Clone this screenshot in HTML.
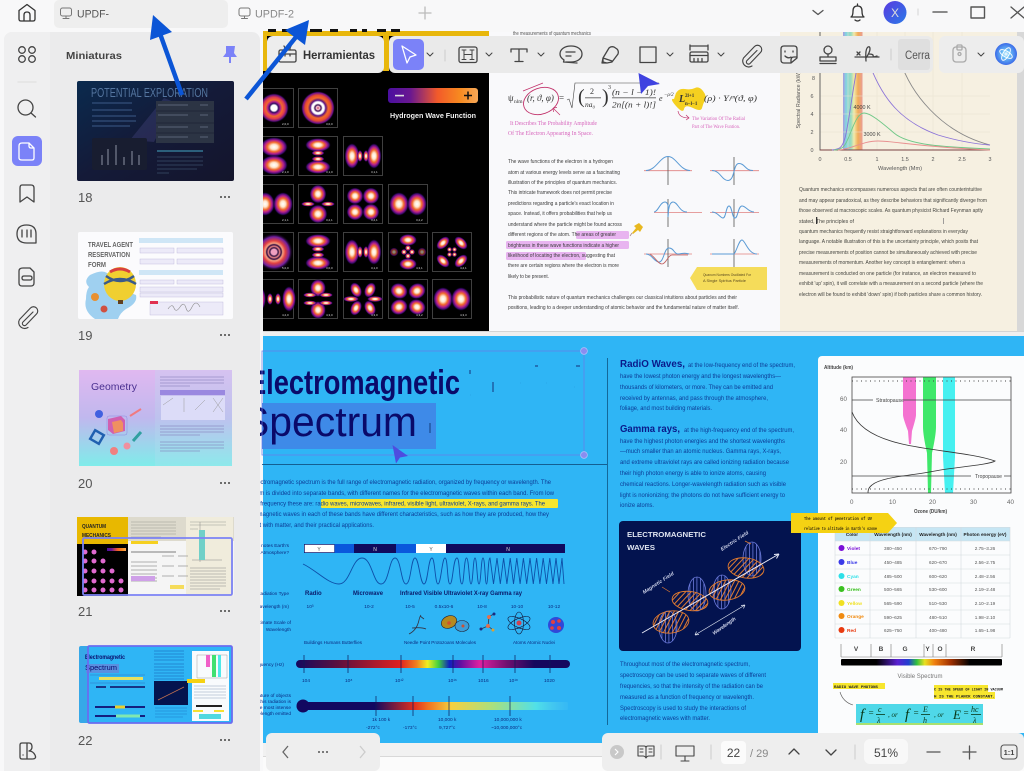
<!DOCTYPE html>
<html lang="es"><head><meta charset="utf-8"><title>UPDF</title>
<style>
html,body{margin:0;padding:0;width:1024px;height:771px;overflow:hidden;background:#f8f8f9}
svg{display:block;filter:blur(.35px);font-family:"Liberation Sans",sans-serif}
.ic{fill:none;stroke:#444;stroke-width:1.3;stroke-linecap:round;stroke-linejoin:round}
.l{fill:#3b3b3b;font-size:5.8px}
.b{fill:#0c3c96;font-size:6px}
.m{fill:#0a2a80;font-size:4.8px}
.w{fill:#ddd;font-size:3px}
.t{fill:#555;font-size:4.6px;text-anchor:middle}
.h{fill:#222;font-size:4.7px;font-weight:bold;text-anchor:middle}
.s{font-family:"Liberation Serif",serif}
</style></head><body>
<svg width="1024" height="771" viewBox="0 0 1024 771" xmlns="http://www.w3.org/2000/svg">
<defs>
<pattern id="po" width="4" height="4" patternUnits="userSpaceOnUse" patternTransform="rotate(35)"><rect width="1" height="4" fill="#e07a30"/></pattern>
<pattern id="pb" width="3.5" height="4" patternUnits="userSpaceOnUse"><rect width=".8" height="4" fill="#6a78d8"/></pattern>
<radialGradient id="o"><stop offset="0" stop-color="#fff"/><stop offset=".25" stop-color="#ffe6cc"/><stop offset=".48" stop-color="#f26a2a"/><stop offset=".68" stop-color="#b21f8e"/><stop offset=".86" stop-color="#3c0a70"/><stop offset="1" stop-color="#000" stop-opacity="0"/></radialGradient>
<radialGradient id="r1"><stop offset="0" stop-color="#fff"/><stop offset=".2" stop-color="#fff"/><stop offset=".3" stop-color="#300a60"/><stop offset=".42" stop-color="#b21f8e"/><stop offset=".55" stop-color="#f26a2a"/><stop offset=".72" stop-color="#e03a50"/><stop offset=".88" stop-color="#5a1080"/><stop offset="1" stop-color="#000" stop-opacity="0"/></radialGradient>
<radialGradient id="r2"><stop offset="0" stop-color="#c84060"/><stop offset=".1" stop-color="#ffd0d8"/><stop offset=".18" stop-color="#3a0a50"/><stop offset=".27" stop-color="#fff"/><stop offset=".36" stop-color="#fff"/><stop offset=".46" stop-color="#5a1080"/><stop offset=".6" stop-color="#f26a2a"/><stop offset=".75" stop-color="#e84a30"/><stop offset=".9" stop-color="#6a1090"/><stop offset="1" stop-color="#000" stop-opacity="0"/></radialGradient>
<radialGradient id="r3"><stop offset="0" stop-color="#f0a0c0"/><stop offset=".15" stop-color="#f0a0c0"/><stop offset=".22" stop-color="#301040"/><stop offset=".3" stop-color="#e88"/><stop offset=".38" stop-color="#300a40"/><stop offset=".46" stop-color="#f8a080"/><stop offset=".6" stop-color="#e04040"/><stop offset=".8" stop-color="#7020a0"/><stop offset="1" stop-color="#000" stop-opacity="0"/></radialGradient>
<linearGradient id="hb"><stop offset="0" stop-color="#4a0fa0"/><stop offset=".25" stop-color="#6a1890"/><stop offset=".55" stop-color="#f25a2a"/><stop offset=".8" stop-color="#f78a20"/><stop offset="1" stop-color="#f7a858"/></linearGradient>
<linearGradient id="fq" gradientUnits="userSpaceOnUse" x1="296" x2="570" y1="0" y2="0"><stop offset="0" stop-color="#15085e"/><stop offset=".15" stop-color="#5a1040"/><stop offset=".38" stop-color="#e02020"/><stop offset=".44" stop-color="#f08020"/><stop offset=".48" stop-color="#f0f020"/><stop offset=".52" stop-color="#40d040"/><stop offset=".56" stop-color="#1020c0"/><stop offset=".6" stop-color="#6010a0"/><stop offset=".67" stop-color="#e020a0"/><stop offset=".77" stop-color="#701070"/><stop offset=".87" stop-color="#15085e"/><stop offset="1" stop-color="#15085e"/></linearGradient>
<linearGradient id="tm" gradientUnits="userSpaceOnUse" x1="303" x2="568" y1="0" y2="0"><stop offset="0" stop-color="#120860"/><stop offset=".27" stop-color="#120860"/><stop offset=".42" stop-color="#e03020"/><stop offset=".47" stop-color="#f07020"/><stop offset=".56" stop-color="#f5d040"/><stop offset=".72" stop-color="#a8e080"/><stop offset=".88" stop-color="#50e0e8"/><stop offset="1" stop-color="#50c8f0" stop-opacity=".2"/></linearGradient>
<linearGradient id="vs" gradientUnits="userSpaceOnUse" x1="841" x2="1002" y1="0" y2="0"><stop offset="0" stop-color="#000"/><stop offset=".22" stop-color="#000"/><stop offset=".35" stop-color="#5a20d0"/><stop offset=".42" stop-color="#2040d0"/><stop offset=".47" stop-color="#30c040"/><stop offset=".52" stop-color="#e8e020"/><stop offset=".58" stop-color="#f08010"/><stop offset=".68" stop-color="#a03000"/><stop offset=".8" stop-color="#000"/><stop offset="1" stop-color="#000"/></linearGradient>
<linearGradient id="sp"><stop offset="0" stop-color="#9a8ce0"/><stop offset=".15" stop-color="#70d0e0"/><stop offset=".4" stop-color="#8ad8b8"/><stop offset=".55" stop-color="#f0e8a0"/><stop offset=".75" stop-color="#f0a040"/><stop offset=".95" stop-color="#e89080"/><stop offset="1" stop-color="#f6f0e0"/></linearGradient>
<linearGradient id="t18" x1="0" y1="0" x2="1" y2="1"><stop offset="0" stop-color="#0a2a4e"/><stop offset=".5" stop-color="#141a38"/><stop offset="1" stop-color="#14152c"/></linearGradient>
<linearGradient id="t20" x1="0" y1="0" x2="0" y2="1"><stop offset="0" stop-color="#e0b8f0"/><stop offset=".5" stop-color="#c0b8ee"/><stop offset="1" stop-color="#80ecea"/></linearGradient>
<linearGradient id="av" x1="0" y1="0" x2="1" y2="1"><stop offset="0" stop-color="#5a3ae0"/><stop offset="1" stop-color="#2a7ae8"/></linearGradient>
<radialGradient id="ai"><stop offset="0" stop-color="#fff"/><stop offset=".3" stop-color="#70c8f8"/><stop offset="1" stop-color="#3a6ae8"/></radialGradient>
<g id="a0"><rect x=".5" y=".5" width="39" height="39" fill="#000" stroke="#5a5a5a" stroke-width=".7"/><circle cx="20" cy="20" r="15" fill="url(#r1)"/></g>
<g id="a1"><rect x=".5" y=".5" width="39" height="39" fill="#000" stroke="#5a5a5a" stroke-width=".7"/><circle cx="20" cy="20" r="17" fill="url(#r2)"/></g>
<g id="a2"><rect x=".5" y=".5" width="39" height="39" fill="#000" stroke="#5a5a5a" stroke-width=".7"/><circle cx="20" cy="20" r="19" fill="url(#r3)"/></g>
<g id="b0"><rect x=".5" y=".5" width="39" height="39" fill="#000" stroke="#5a5a5a" stroke-width=".7"/><ellipse cx="20" cy="11" rx="14" ry="10" fill="url(#o)"/><ellipse cx="20" cy="29" rx="14" ry="10" fill="url(#o)"/></g>
<g id="b1"><rect x=".5" y=".5" width="39" height="39" fill="#000" stroke="#5a5a5a" stroke-width=".7"/><ellipse cx="20" cy="9" rx="13" ry="7" fill="url(#o)"/><ellipse cx="20" cy="31" rx="13" ry="7" fill="url(#o)"/><ellipse cx="20" cy="17" rx="6.500" ry="2.800" fill="url(#o)"/><ellipse cx="20" cy="23" rx="6.500" ry="2.800" fill="url(#o)"/></g>
<g id="b2"><rect x=".5" y=".5" width="39" height="39" fill="#000" stroke="#5a5a5a" stroke-width=".7"/><ellipse cx="9" cy="20" rx="7.500" ry="13" fill="url(#o)"/><ellipse cx="31" cy="20" rx="7.500" ry="13" fill="url(#o)"/><ellipse cx="17" cy="20" rx="2.800" ry="6" fill="url(#o)"/><ellipse cx="23" cy="20" rx="2.800" ry="6" fill="url(#o)"/></g>
<g id="c0"><rect x=".5" y=".5" width="39" height="39" fill="#000" stroke="#5a5a5a" stroke-width=".7"/><ellipse cx="11" cy="20" rx="10" ry="12" fill="url(#o)"/><ellipse cx="29" cy="20" rx="10" ry="12" fill="url(#o)"/></g>
<g id="c1"><rect x=".5" y=".5" width="39" height="39" fill="#000" stroke="#5a5a5a" stroke-width=".7"/><ellipse cx="20" cy="10" rx="8.500" ry="9.500" fill="url(#o)"/><ellipse cx="20" cy="30" rx="9.500" ry="9.500" fill="url(#o)"/><ellipse cx="10" cy="20" rx="7" ry="2.500" fill="url(#o)"/><ellipse cx="30" cy="20" rx="7" ry="2.500" fill="url(#o)"/></g>
<g id="c2"><rect x=".5" y=".5" width="39" height="39" fill="#000" stroke="#5a5a5a" stroke-width=".7"/><circle cx="12" cy="12" r="8.500" fill="url(#o)"/><circle cx="28" cy="12" r="8.500" fill="url(#o)"/><circle cx="12" cy="28" r="8.500" fill="url(#o)"/><circle cx="28" cy="28" r="8.500" fill="url(#o)"/></g>
<g id="d0"><rect x=".5" y=".5" width="39" height="39" fill="#000" stroke="#5a5a5a" stroke-width=".7"/><ellipse cx="20" cy="8" rx="9" ry="6" fill="url(#o)"/><ellipse cx="20" cy="32" rx="9" ry="6" fill="url(#o)"/><circle cx="6" cy="20" r="4.500" fill="url(#o)" opacity=".55"/><circle cx="34" cy="20" r="4.500" fill="url(#o)" opacity=".55"/><circle cx="16" cy="20" r="3" fill="url(#o)"/><circle cx="24" cy="20" r="3" fill="url(#o)"/><circle cx="20" cy="16" r="3" fill="url(#o)"/><circle cx="20" cy="24" r="3" fill="url(#o)"/></g>
<g id="d1"><rect x=".5" y=".5" width="39" height="39" fill="#000" stroke="#5a5a5a" stroke-width=".7"/><ellipse cx="11" cy="11" rx="8" ry="5" transform="rotate(-45 11 11)" fill="url(#o)"/><ellipse cx="29" cy="11" rx="8" ry="5" transform="rotate(45 29 11)" fill="url(#o)"/><ellipse cx="11" cy="29" rx="8" ry="5" transform="rotate(45 11 29)" fill="url(#o)"/><ellipse cx="29" cy="29" rx="8" ry="5" transform="rotate(-45 29 29)" fill="url(#o)"/><circle cx="17.500" cy="17.500" r="2.500" fill="url(#o)"/><circle cx="22.500" cy="17.500" r="2.500" fill="url(#o)"/><circle cx="17.500" cy="22.500" r="2.500" fill="url(#o)"/><circle cx="22.500" cy="22.500" r="2.500" fill="url(#o)"/></g>
<g id="e0"><rect x=".5" y=".5" width="39" height="39" fill="#000" stroke="#5a5a5a" stroke-width=".7"/><ellipse cx="5" cy="20" rx="7" ry="13" fill="url(#o)"/><ellipse cx="35" cy="20" rx="7" ry="13" fill="url(#o)"/><ellipse cx="16" cy="20" rx="3" ry="6" fill="url(#o)"/><ellipse cx="24" cy="20" rx="3" ry="6" fill="url(#o)"/></g>
<g id="e1"><rect x=".5" y=".5" width="39" height="39" fill="#000" stroke="#5a5a5a" stroke-width=".7"/><ellipse cx="20" cy="9" rx="8" ry="9" fill="url(#o)"/><ellipse cx="20" cy="31" rx="8" ry="9" fill="url(#o)"/><ellipse cx="12" cy="16" rx="7" ry="2.500" fill="url(#o)"/><ellipse cx="28" cy="16" rx="7" ry="2.500" fill="url(#o)"/><ellipse cx="12" cy="24" rx="7" ry="2.500" fill="url(#o)"/><ellipse cx="28" cy="24" rx="7" ry="2.500" fill="url(#o)"/></g>
<g id="e2"><rect x=".5" y=".5" width="39" height="39" fill="#000" stroke="#5a5a5a" stroke-width=".7"/><ellipse cx="13" cy="11" rx="5.500" ry="8" transform="rotate(-25 13 11)" fill="url(#o)"/><ellipse cx="27" cy="11" rx="5.500" ry="8" transform="rotate(25 27 11)" fill="url(#o)"/><ellipse cx="13" cy="29" rx="5.500" ry="8" transform="rotate(25 13 29)" fill="url(#o)"/><ellipse cx="27" cy="29" rx="5.500" ry="8" transform="rotate(-25 27 29)" fill="url(#o)"/><ellipse cx="8" cy="20" rx="8" ry="3" fill="url(#o)"/><ellipse cx="32" cy="20" rx="8" ry="3" fill="url(#o)"/></g>
<g id="e3"><rect x=".5" y=".5" width="39" height="39" fill="#000" stroke="#5a5a5a" stroke-width=".7"/><ellipse cx="11" cy="12" rx="9" ry="8" transform="rotate(25 11 12)" fill="url(#o)"/><ellipse cx="29" cy="12" rx="9" ry="8" transform="rotate(-25 29 12)" fill="url(#o)"/><ellipse cx="11" cy="28" rx="9" ry="8" transform="rotate(-25 11 28)" fill="url(#o)"/><ellipse cx="29" cy="28" rx="9" ry="8" transform="rotate(25 29 28)" fill="url(#o)"/></g>
</defs>

<rect width="1024" height="771" fill="#f8f8f9"/>

<!-- TOP PAGE -->
<rect x="263" y="32" width="226" height="299" fill="#000"/>
<rect x="489" y="32" width="291" height="299" fill="#f9f9fb"/>
<rect x="780" y="32" width="237" height="299" fill="#f6f0e1"/>
<rect x="1017" y="32" width="7" height="299" fill="#d8d8d8"/>
<rect x="263" y="331" width="761" height="5" fill="#efefef"/>
<rect x="263" y="331" width="761" height="1" fill="#d4d4d4"/>
<!-- yellow band -->
<rect x="263" y="31" width="226" height="5" fill="#e8b70c"/>
<rect x="263" y="31" width="4" height="40" fill="#e8b70c"/>
<rect x="383" y="31" width="6" height="40" fill="#e8b70c"/>
<path d="M268 29h8v3h-8zM282 29h6v3h-6zM292 29h8v3h-8zM310 29h12v3h-12zM330 29h8v3h-8zM350 29h7v3h-7zM362 29h5v3h-5zM377 29h9v3h-9zM391 29h9v3h-9z" fill="#111"/>
<!-- orbitals -->
<use href="#a0" x="254" y="88"/><use href="#a1" x="298" y="88"/>
<use href="#b0" x="254" y="136"/><use href="#b1" x="298" y="136"/><use href="#b2" x="343" y="136"/>
<use href="#c0" x="254" y="184"/><use href="#c1" x="298" y="184"/><use href="#c2" x="343" y="184"/><use href="#c0" x="388" y="184"/>
<use href="#a2" x="254" y="232"/><use href="#b1" x="298" y="232"/><use href="#b2" x="343" y="232"/><use href="#d0" x="388" y="232"/><use href="#d1" x="432" y="232"/>
<use href="#e0" x="254" y="279"/><use href="#e1" x="298" y="279"/><use href="#e2" x="343" y="279"/><use href="#e3" x="388" y="279"/><use href="#c0" x="432" y="279"/>
<rect x="254" y="80" width="9" height="250" fill="#f0f0f0"/>
<g class="w">
<text x="282" y="125">2,0,0</text><text x="326" y="125">3,0,0</text>
<text x="282" y="173">2,1,0</text><text x="326" y="173">3,1,0</text><text x="371" y="173">3,1,1</text>
<text x="282" y="221">2,1,1</text><text x="326" y="221">3,2,1</text><text x="371" y="221">3,2,1</text><text x="416" y="221">3,2,2</text>
<text x="282" y="269">5,0,0</text><text x="326" y="269">3,0,0</text><text x="371" y="269">3,1,0</text><text x="416" y="269">4,3,1</text><text x="460" y="269">4,2,1</text>
<text x="282" y="316">4,2,0</text><text x="326" y="316">4,3,0</text><text x="371" y="316">4,3,0</text><text x="416" y="316">4,3,2</text><text x="460" y="316">4,3,3</text>
</g>
<rect x="388" y="88" width="90" height="15" rx="3" fill="url(#hb)"/>
<rect x="395" y="94.800" width="9" height="1.600" fill="#ddd"/>
<path d="M464 95.500h8M468 91.500v8" stroke="#111" stroke-width="1.500"/>
<text x="390" y="118" fill="#eee" font-size="7.200" font-weight="bold" textLength="86" lengthAdjust="spacingAndGlyphs">Hydrogen Wave Function</text>

<!-- white page: formula -->
<text x="513" y="35" font-size="5" fill="#555" textLength="78" lengthAdjust="spacingAndGlyphs">the measurements of quantum mechanics</text>
<g class="s" fill="#333">
<text x="508" y="101" font-size="9">ψ</text><text x="514" y="103" font-size="5.500">nlm</text>
<text x="527" y="101" font-size="9" font-style="italic">(r, ϑ, φ)</text>
<text x="559" y="101" font-size="9">=</text>
<path d="M567 100l2-1 3 9 3-25h84" fill="none" stroke="#444" stroke-width=".6"/>
<text x="578" y="103" font-size="20" font-weight="100">(</text><text x="602" y="103" font-size="20" font-weight="100">)</text>
<text x="590" y="94" font-size="8">2</text><rect x="585" y="97.500" width="16" height=".7" fill="#333"/>
<text x="585" y="107" font-size="7.500" font-style="italic">na₀</text>
<text x="608" y="89" font-size="6">3</text>
<text x="612" y="95" font-size="8.500" font-style="italic" textLength="44" lengthAdjust="spacingAndGlyphs">(n − l − 1)!</text>
<rect x="612" y="97.500" width="44" height=".7" fill="#333"/>
<text x="612" y="107.500" font-size="8.500" font-style="italic" textLength="44" lengthAdjust="spacingAndGlyphs">2n[(n + l)!]</text>
<text x="659" y="101" font-size="8" font-style="italic">e</text><text x="664" y="96" font-size="5" font-style="italic">−ρ/2</text>
</g>
<path d="M676 93q3-5 9-4t10-1 8 3 2 9-3 8-9 0-9 1-8-3-2-7z" fill="#f5d020"/>
<g class="s" fill="#333">
<text x="679" y="102" font-size="10" font-weight="bold" font-style="italic">L</text>
<text x="685" y="97" font-size="5" font-weight="bold">2l+1</text><text x="685" y="105" font-size="5" font-weight="bold">n−l−1</text>
<text x="704" y="101" font-size="8.500" font-style="italic" textLength="53" lengthAdjust="spacingAndGlyphs">(ρ) · Yₗᵐ(ϑ, φ)</text>
</g>
<ellipse cx="541" cy="101" rx="18" ry="13" transform="rotate(-20 541 101)" fill="none" stroke="#c2336b" stroke-width=".9"/>
<path d="M523 91l20-8M560 115q-4-4-7-7M553 108l4-.5M553 108l.5 4" fill="none" stroke="#c2336b" stroke-width=".7"/>
<g class="s" fill="#d765bc" font-size="6">
<text x="510" y="125" textLength="87" lengthAdjust="spacingAndGlyphs">It Describes The Probability Amplitude</text>
<text x="508" y="135" textLength="85" lengthAdjust="spacingAndGlyphs">Of The Electron Appearing In Space.</text>
<text x="692" y="120" font-size="5" textLength="53" lengthAdjust="spacingAndGlyphs">The Variation Of The Radial</text>
<text x="692" y="128" font-size="5" textLength="48" lengthAdjust="spacingAndGlyphs">Part of The Wave Funtion.</text>
</g>
<path d="M678 111q1 7 11 7M686 115l3 3-3 2" fill="none" stroke="#c2336b" stroke-width=".7"/>

<!-- highlights -->
<g fill="#e8b4f0"><rect x="576" y="231" width="53" height="8" rx="1.500"/><rect x="506" y="241" width="123" height="8" rx="1.500"/><rect x="506" y="252" width="80" height="8" rx="1.500"/></g>
<g class="l">
<text x="508" y="163" textLength="105" lengthAdjust="spacingAndGlyphs">The wave functions of the electron in a hydrogen</text>
<text x="508" y="174" textLength="112" lengthAdjust="spacingAndGlyphs">atom at various energy levels serve as a fascinating</text>
<text x="508" y="184" textLength="109" lengthAdjust="spacingAndGlyphs">illustration of the principles of quantum mechanics.</text>
<text x="508" y="194" textLength="104" lengthAdjust="spacingAndGlyphs">This intricate framework does not permit precise</text>
<text x="508" y="205" textLength="106" lengthAdjust="spacingAndGlyphs">predictions regarding a particle's exact location in</text>
<text x="508" y="215" textLength="104" lengthAdjust="spacingAndGlyphs">space. Instead, it offers probabilities that help us</text>
<text x="508" y="226" textLength="114" lengthAdjust="spacingAndGlyphs">understand where the particle might be found across</text>
<text x="508" y="236" textLength="108" lengthAdjust="spacingAndGlyphs">different regions of the atom. The areas of greater</text>
<text x="508" y="247" textLength="111" lengthAdjust="spacingAndGlyphs">brightness in these wave functions indicate a higher</text>
<text x="508" y="257" textLength="107" lengthAdjust="spacingAndGlyphs">likelihood of locating the electron, suggesting that</text>
<text x="508" y="267" textLength="111" lengthAdjust="spacingAndGlyphs">there are certain regions where the electron is more</text>
<text x="508" y="278" textLength="41" lengthAdjust="spacingAndGlyphs">likely to be present.</text>
<text x="508" y="299" textLength="229" lengthAdjust="spacingAndGlyphs">This probabilistic nature of quantum mechanics challenges our classical intuitions about particles and their</text>
<text x="508" y="309" textLength="231" lengthAdjust="spacingAndGlyphs">positions, leading to a deeper understanding of atomic behavior and the fundamental nature of matter itself.</text>
</g>
<!-- pin -->
<path d="M632 233l4-5-2-2 5-3 4 4-3 5-2-2-5 4z" fill="#e8b820"/><path d="M632 233l-2 3" stroke="#a88" stroke-width=".8"/>
<!-- small plots -->
<g fill="none" stroke-width=".8">
<g stroke="#e08080"><path d="M644 170.700h48M710 170.700h49M654 212.500h48M710 212.500h49M644 254h48M710 254h49"/></g>
<g stroke="#555"><path d="M668 157v28M734 157v28M668 199v28M734 199v28M668 239v28M734 239v28"/></g>
<g stroke="#5b9bd5" stroke-width="1">
<path d="M646 170.500c10 0 14-14 22-14s12 14 22 14"/>
<path d="M712 170.500c8 0 10 10 16 10 7 0 5-17 11-17s6 7 14 7"/>
<path d="M654 212c4 0 6-10 11-10 5 0 3 15 3 15s0-15 5-15 6 10 14 10"/>
<path d="M712 212c6 0 8 6 11 6s3-12 6-12 3 12 6 12 3-12 7-12 6 6 12 6"/>
<path d="M646 254c6 0 8 8 13 8s5-14 10-14 5 6 9 6 6-2 11 0"/>
<path d="M712 254c12 0 16 0 22-0 3-4 5-14 8-14s6 14 15 14"/>
</g>
<path d="M650 254c6 4 8 10 12 10s6-9 10-9 8 0 16 0" stroke="#c06060"/>
</g>
<!-- yellow callout -->
<path d="M690 278l7-11h70v23h-70z" fill="#f5dc5a"/>
<g fill="#5a4a20" font-size="3.600"><text x="703" y="276" textLength="48" lengthAdjust="spacingAndGlyphs">Quanum Numbers Oscillated For</text><text x="703" y="282" textLength="43" lengthAdjust="spacingAndGlyphs">A Single Spiritus Particle</text></g>

<!-- beige chart -->
<rect x="843" y="32" width="20" height="118" fill="url(#sp)" opacity=".85"/>
<g stroke="#e8e2d0" stroke-width=".5"><path d="M820 96h170M820 114h170M820 132h170M848 32v118M877 32v118M905 32v118M933 32v118M962 32v118"/></g>
<path d="M820 32V150H990" fill="none" stroke="#555" stroke-width=".9"/>
<path d="M820 150h170" stroke="#a03030" stroke-width=".6"/>
<g fill="none" stroke-width=".9">
<path d="M900 60c10 32 40 72 90 85" stroke="#888"/>
<path d="M832 150c8-1 10-2 13-12s8-50 12-70M868 60c14 40 34 62 70 75 20 6 38 9 52 10" stroke="#8a72d8"/>
<path d="M834 150c10 0 12-6 16-16s8-21 14-21 16 8 30 20 48 14 96 16" stroke="#70c888"/>
<path d="M838 150c12 0 24-9 40-9s40 6 112 9" stroke="#e89090"/>
</g>
<g fill="#555" font-size="5.400" text-anchor="middle">
<text x="820" y="161">0</text><text x="848" y="161">0.5</text><text x="877" y="161">1</text><text x="905" y="161">1.5</text><text x="933" y="161">2</text><text x="962" y="161">2.5</text><text x="990" y="161">3</text>
<text x="900" y="170" font-size="5.600">Wavelength (Mm)</text>
<text x="815" y="80" text-anchor="end">8</text><text x="812" y="98">6</text><text x="812" y="116">4</text><text x="812" y="134">2</text><text x="812" y="152">0</text>
<text x="862" y="109" fill="#444">4000 K</text><text x="872" y="136" fill="#444">3000 K</text>
<text transform="translate(800,100) rotate(-90)" font-size="5.400">Spectral Radiance (kW)</text>
</g>
<g class="l" style="fill:#454540;font-size:5.600px">
<text x="799" y="191" textLength="183" lengthAdjust="spacingAndGlyphs">Quantum mechanics encompasses numerous aspects that are often counterintuitive</text>
<text x="799" y="202" textLength="188" lengthAdjust="spacingAndGlyphs">and may appear paradoxical, as they describe behaviors that significantly diverge from</text>
<text x="799" y="212" textLength="184" lengthAdjust="spacingAndGlyphs">those observed at macroscopic scales. As quantum physicist Richard Feynman aptly</text>
<text x="799" y="223" textLength="55" lengthAdjust="spacingAndGlyphs">stated, The principles of</text>
<text x="799" y="233" textLength="169" lengthAdjust="spacingAndGlyphs">quantum mechanics frequently resist straightforward explanations in everyday</text>
<text x="799" y="243" textLength="179" lengthAdjust="spacingAndGlyphs">language. A notable illustration of this is the uncertainty principle, which posits that</text>
<text x="799" y="254" textLength="178" lengthAdjust="spacingAndGlyphs">precise measurements of position cannot be simultaneously achieved with precise</text>
<text x="799" y="264" textLength="166" lengthAdjust="spacingAndGlyphs">measurements of momentum. Another key concept is entanglement: when a</text>
<text x="799" y="275" textLength="177" lengthAdjust="spacingAndGlyphs">measurement is conducted on one particle (for instance, an electron measured to</text>
<text x="799" y="285" textLength="184" lengthAdjust="spacingAndGlyphs">exhibit 'up' spin), it will correlate with a measurement on a second particle (where the</text>
<text x="799" y="296" textLength="183" lengthAdjust="spacingAndGlyphs">electron will be found to exhibit 'down' spin) if both particles share a common history.</text>
</g>
<rect x="816" y="217" width="1.300" height="7" fill="#333"/><rect x="943" y="218" width=".8" height="6" fill="#888"/>

<!-- BLUE PAGE -->
<rect x="263" y="336" width="761" height="407" fill="#2fb5f5"/>
<rect x="263" y="743" width="761" height="13" fill="#f1f1f1"/><rect x="263" y="756" width="761" height="1" fill="#d8d8d8"/><rect x="263" y="757" width="761" height="14" fill="#fbfbfb"/>
<rect x="262" y="403" width="174" height="46" fill="#3e8ae8"/>
<text x="248" y="394" font-size="34" font-weight="bold" fill="#0a0a6a" textLength="212" lengthAdjust="spacingAndGlyphs">Electromagnetic</text>
<text x="242" y="436" font-size="42" fill="#0a0a6a" textLength="175" lengthAdjust="spacingAndGlyphs">Spectrum</text>
<path d="M470 370v4M493 382v10M520 383h.1M470 395h.1M535 366h3M546 383h.1M576 366h4M574 387h.1M430 423v10" stroke="#1a4a90" stroke-width="1.200" fill="none"/>
<rect x="262" y="351" width="322" height="104" fill="none" stroke="#6a7be8" stroke-width=".7"/>
<circle cx="584" cy="351" r="3.400" fill="#8a8df0" stroke="#b5c0f8" stroke-width=".7"/><circle cx="584" cy="455" r="3.400" fill="#8a8df0" stroke="#b5c0f8" stroke-width=".7"/>
<rect x="262" y="464" width="345" height=".8" fill="#0e4a7a"/>
<rect x="607" y="358" width=".9" height="367" fill="#12608f"/>
<rect x="321" y="499" width="237" height="9" rx="1" fill="#f7e62e"/>
<g class="b">
<text x="252" y="484" textLength="299" lengthAdjust="spacingAndGlyphs">Electromagnetic spectrum is the full range of electromagnetic radiation, organized by frequency or wavelength. The</text>
<text x="240" y="495" textLength="314" lengthAdjust="spacingAndGlyphs">spectrum is divided into separate bands, with different names for the electromagnetic waves within each band. From low</text>
<text x="241" y="505.500" textLength="304" lengthAdjust="spacingAndGlyphs">to high frequency these are: radio waves, microwaves, infrared, visible light, ultraviolet, X-rays, and gamma rays. The</text>
<text x="240" y="516" textLength="309" lengthAdjust="spacingAndGlyphs">electromagnetic waves in each of these bands have different characteristics, such as how they are produced, how they</text>
<text x="242" y="527" textLength="132" lengthAdjust="spacingAndGlyphs">interact with matter, and their practical applications.</text>
</g>
<!-- spectrum chart -->
<rect x="304" y="544" width="261" height="9" fill="#100a5e"/>
<rect x="334" y="544" width="20" height="9" fill="#0a58dc"/><rect x="396" y="544" width="20" height="9" fill="#0a58dc"/>
<rect x="304.500" y="544.500" width="30" height="8" fill="#fff" stroke="#102070" stroke-width=".5"/><rect x="416" y="544" width="30" height="9" fill="#fff"/>
<g font-size="5" text-anchor="middle"><text x="319" y="551" fill="#555">Y</text><text x="431" y="551" fill="#555">Y</text><text x="375" y="551" fill="#ddd">N</text><text x="508" y="551" fill="#ddd">N</text></g>
<path d="M303 564C316 570 328 584 339 584C350 584 352 558 362 558C372 558 373 584 381 584C389 584 389 558 395 558C401 558 401 584 406 584C411 584 411 558 415 558C419 558 420 584 424 584C428 584 428 558 432 558C435 558 435 584 438 584C441 584 442 558 445 558C448 558 447 584 450 584C453 584 453 558 457 558C460 558 459 584 462 584C464 584 464 558 466.500 558C469 558 469 584 471 584C473 584 473 558 475 558C477 558 477 584 479 584C481 584 481 558 483 558C485 558 485 584 486.500 584C488 584 488 558 490 558L493.500 584L497 558L500.300 584L503.600 558L506.900 584L510.200 558L513.500 584L516.800 558L520.100 584L523.400 558L526.700 584L530 558L533.300 584L536.600 558L539.900 584L543.200 558L546.500 584L549.800 558L553 584L556 558L559 584L562 558L564 584" fill="none" stroke="#0e4fa8" stroke-width=".9"/>
<g fill="#0a1a6a" font-size="6" font-weight="bold"><text x="305" y="595">Radio</text><text x="353" y="595" textLength="30" lengthAdjust="spacingAndGlyphs">Microwave</text><text x="400" y="595" textLength="122" lengthAdjust="spacingAndGlyphs">Infrared Visible Ultraviolet X-ray Gamma ray</text></g>
<g class="m" text-anchor="end">
<text x="289" y="547">notes Earth's</text><text x="289" y="554">Atmosphere?</text>
<text x="289" y="595">Radiation Type</text><text x="289" y="608">Wavelength (m)</text>
<text x="291" y="624">Approximate Scale of</text><text x="291" y="631">Wavelength</text>
<text x="284" y="666">Frequency (Hz)</text>
<text x="291" y="697">Temperature of objects</text><text x="291" y="703">this radiation is</text><text x="291" y="709">the most intense</text><text x="291" y="715">wavelength emitted</text>
</g>
<g class="m" text-anchor="middle">
<text x="310" y="608">10³</text><text x="369" y="608">10-2</text><text x="410" y="608">10-5</text><text x="444" y="608">0.5x10-6</text><text x="482" y="608">10-8</text><text x="517" y="608">10-10</text><text x="554" y="608">10-12</text>
</g>
<g class="m"><text x="304" y="644" textLength="58" lengthAdjust="spacingAndGlyphs">Buildings Humans Butterflies</text><text x="404" y="644" textLength="72" lengthAdjust="spacingAndGlyphs">Needle Point Protozoans Molecules</text><text x="513" y="644" textLength="42" lengthAdjust="spacingAndGlyphs">Atoms Atomic Nuclei</text></g>
<!-- needle/proto/mol/atom/nuc -->
<path d="M409 634q8-4 10-14 1-4 2-5M412 628q10-1 14 1M420 616l4 3" fill="none" stroke="#334" stroke-width=".8"/>
<ellipse cx="449" cy="622" rx="8" ry="6" transform="rotate(-25 449 622)" fill="#b58a20" stroke="#223" stroke-width=".6"/><ellipse cx="462" cy="626" rx="7" ry="5.500" fill="#3d9ed8" stroke="#223" stroke-width=".6"/><circle cx="449" cy="623" r="1.800" fill="#d05030"/><circle cx="463" cy="626" r="1.500" fill="#d05030"/>
<path d="M481 629l7-3 1-9M488 626l5 4M488 617l6-3" stroke="#334" stroke-width=".8" fill="none"/><circle cx="488" cy="626" r="2" fill="#e07050"/><circle cx="489" cy="617" r="2" fill="#e07050"/><circle cx="481" cy="629" r="1.500" fill="#1a2a80"/><circle cx="494" cy="614" r="1.500" fill="#1a2a80"/><circle cx="493" cy="630" r="1.500" fill="#e0a030"/>
<g fill="none" stroke="#113" stroke-width=".6"><ellipse cx="519" cy="623" rx="12" ry="4.500" transform="rotate(25 519 623)"/><ellipse cx="519" cy="623" rx="12" ry="4.500" transform="rotate(-25 519 623)"/><ellipse cx="519" cy="623" rx="4.500" ry="11"/></g><circle cx="519" cy="623" r="2.500" fill="#d04050"/>
<circle cx="556" cy="625" r="8" fill="#3048d8"/><circle cx="553" cy="622" r="2" fill="#e04040"/><circle cx="559" cy="628" r="2" fill="#e04040"/><circle cx="559" cy="621" r="1.800" fill="#e04040"/><circle cx="552" cy="628" r="1.800" fill="#e04040"/>
<!-- freq -->
<rect x="296" y="660" width="274" height="8" rx="4" fill="url(#fq)"/>
<path d="M304 655v18M348 655v18M401 655v18M453 655v18M483 655v18M515 655v18M550 655v18" stroke="#0a1a5a" stroke-width=".7"/>
<g class="m"><text x="302" y="682">104</text><text x="345" y="682">10⁸</text><text x="395" y="682">10¹²</text><text x="448" y="682">10¹⁶</text><text x="478" y="682">1016</text><text x="509" y="682">10¹⁸</text><text x="544" y="682">1020</text></g>
<!-- temp -->
<rect x="303" y="702" width="265" height="8" rx="1" fill="url(#tm)"/><circle cx="303" cy="706" r="6.500" fill="#120860"/>
<path d="M376 696v20M413 696v20M449 696v20M510 696v20" stroke="#0a1a5a" stroke-width=".7"/>
<g class="m"><text x="372" y="721">1k 100 k</text><text x="438" y="721">10,000 k</text><text x="494" y="721">10,000,000 k</text><text x="366" y="729">-272°c</text><text x="403" y="729">-173°c</text><text x="439" y="729">9,727°c</text><text x="491" y="729">~10,000,000°c</text></g>

<!-- right text column -->
<g fill="#0a1a8a" font-weight="bold"><text x="620" y="367" font-size="10.500" textLength="65" lengthAdjust="spacingAndGlyphs">RadiO Waves,</text><text x="620" y="432" font-size="10" textLength="60" lengthAdjust="spacingAndGlyphs">Gamma rays,</text></g>
<g class="b" style="font-size:6.100px">
<text x="688" y="367" textLength="107" lengthAdjust="spacingAndGlyphs">at the low-frequency end of the spectrum,</text>
<text x="620" y="378" textLength="161" lengthAdjust="spacingAndGlyphs">have the lowest photon energy and the longest wavelengths—</text>
<text x="620" y="389" textLength="153" lengthAdjust="spacingAndGlyphs">thousands of kilometers, or more. They can be emitted and</text>
<text x="620" y="400" textLength="148" lengthAdjust="spacingAndGlyphs">received by antennas, and pass through the atmosphere,</text>
<text x="620" y="410" textLength="92" lengthAdjust="spacingAndGlyphs">foliage, and most building materials.</text>
<text x="684" y="432" textLength="110" lengthAdjust="spacingAndGlyphs">at the high-frequency end of the spectrum,</text>
<text x="620" y="443" textLength="165" lengthAdjust="spacingAndGlyphs">have the highest photon energies and the shortest wavelengths</text>
<text x="620" y="453" textLength="161" lengthAdjust="spacingAndGlyphs">—much smaller than an atomic nucleus. Gamma rays, X-rays,</text>
<text x="620" y="464" textLength="169" lengthAdjust="spacingAndGlyphs">and extreme ultraviolet rays are called ionizing radiation because</text>
<text x="620" y="475" textLength="146" lengthAdjust="spacingAndGlyphs">their high photon energy is able to ionize atoms, causing</text>
<text x="620" y="486" textLength="166" lengthAdjust="spacingAndGlyphs">chemical reactions. Longer-wavelength radiation such as visible</text>
<text x="620" y="497" textLength="165" lengthAdjust="spacingAndGlyphs">light is nonionizing; the photons do not have sufficient energy to</text>
<text x="620" y="507" textLength="34" lengthAdjust="spacingAndGlyphs">ionize atoms.</text>
<text x="620" y="666" textLength="130" lengthAdjust="spacingAndGlyphs">Throughout most of the electromagnetic spectrum,</text>
<text x="620" y="677" textLength="146" lengthAdjust="spacingAndGlyphs">spectroscopy can be used to separate waves of different</text>
<text x="620" y="688" textLength="143" lengthAdjust="spacingAndGlyphs">frequencies, so that the intensity of the radiation can be</text>
<text x="620" y="699" textLength="134" lengthAdjust="spacingAndGlyphs">measured as a function of frequency or wavelength.</text>
<text x="620" y="710" textLength="126" lengthAdjust="spacingAndGlyphs">Spectroscopy is used to study the interactions of</text>
<text x="620" y="720" textLength="90" lengthAdjust="spacingAndGlyphs">electromagnetic waves with matter.</text>
</g>
<!-- EM box -->
<rect x="619" y="521" width="182" height="130" rx="4" fill="#03134f"/>
<g fill="#dfe4f0" font-weight="bold" font-size="7.200"><text x="627" y="537" textLength="79" lengthAdjust="spacingAndGlyphs">ELECTROMAGNETIC</text><text x="627" y="550" textLength="28" lengthAdjust="spacingAndGlyphs">WAVES</text></g>
<g fill="url(#pb)" stroke="#6a78d8" stroke-width=".8">
<ellipse cx="668" cy="627" rx="9" ry="16"/><ellipse cx="697" cy="594" rx="9" ry="17"/><ellipse cx="722" cy="592" rx="9" ry="17"/><ellipse cx="752" cy="559" rx="9" ry="17"/>
</g>
<g fill="url(#po)" stroke="#e07a30" stroke-width=".9">
<ellipse cx="671" cy="622" rx="18" ry="11" transform="rotate(-8 671 622)"/><ellipse cx="690" cy="601" rx="18" ry="9.500" transform="rotate(8 690 601)"/><ellipse cx="727" cy="590" rx="18" ry="10" transform="rotate(-8 727 590)"/><ellipse cx="746" cy="568" rx="18" ry="10" transform="rotate(8 746 568)"/>
</g>
<path d="M642 633L779 554M779 554l-5 .5M779 554l-2.500 4.500" stroke="#e6e8f6" stroke-width="1" fill="none"/>
<path d="M695 635l50-30M695 635l4-.5M695 635l1.500-3.500M745 605l-4 .5M745 605l-1.500 3.500" stroke="#dfe4f0" stroke-width=".7" fill="none"/>
<g fill="#cfd4ea" font-size="5" font-style="italic" font-weight="bold">
<text transform="translate(722,551) rotate(-33)" textLength="32">Electric Field</text>
<text transform="translate(644,594) rotate(-33)" textLength="36">Magnetic Field</text>
<text transform="translate(714,635) rotate(-35)" textLength="27">Wavelength</text>
</g>
<path d="M662 587l8 5M745 541l6 3" stroke="#e07a30" stroke-width=".7"/>

<!-- WHITE PANEL -->
<path d="M822 356H1024V733H818V360a4 4 0 0 1 4-4z" fill="#fbfcfd"/>
<text x="824" y="369" font-size="5.200" font-weight="bold" fill="#444" textLength="29" lengthAdjust="spacingAndGlyphs">Altitude (km)</text>
<path d="M903 377h13v38q0 3-4 16l-1 13h-2l-1-13q-5-13-5-16z" fill="#f472d0"/>
<path d="M923 377h13v50q0 8-4 26l-1 40h-3l-1-40q-4-18-4-26z" fill="#3fe86a"/>
<path d="M943 377h12v80l-2 36h-8l-2-36z" fill="#46f0f0"/>
<rect x="852" y="377" width="159" height="116" fill="none" stroke="#444" stroke-width=".8"/>
<path d="M852 381h159M852 489h159" stroke="#444" stroke-width="1" stroke-dasharray="1 3.500"/>
<path d="M852 400h21M904 400h107M852 476h119M1004 476h7" stroke="#444" stroke-width=".7"/>
<path d="M852 412c6 16 24 26 50 32 30 7 70 9 93 17-6 4-40 6-60 10-26 5-54 6-63 14-4 3-4 6-4 8" fill="none" stroke="#333" stroke-width=".8"/>
<g fill="#666" font-size="6.200"><text x="840" y="401">60</text><text x="840" y="432">40</text><text x="840" y="464">20</text><text x="850" y="504">0</text><text x="889" y="504">10</text><text x="929" y="504">20</text><text x="970" y="504">30</text><text x="1007" y="504">40</text></g>
<g fill="#444" font-size="5"><text x="876" y="402" textLength="28" lengthAdjust="spacingAndGlyphs">Stratopause</text><text x="975" y="478" textLength="27" lengthAdjust="spacingAndGlyphs">Tropopause</text><text x="914" y="513" textLength="33" lengthAdjust="spacingAndGlyphs" font-weight="bold">Ozone (DU/km)</text></g>
<!-- table -->
<rect x="835" y="527" width="175" height="14" fill="#c6e6f4"/>
<path d="M835 527.500h175M835 541h175M835 555h175M835 569h175M835 583h175M835 596h175M835 610h175M835 624h175M835 638h175M835 527v111M870 527v111M916 527v111M961 527v111M1010 527v111" stroke="#d4dade" stroke-width=".6" fill="none"/>
<g class="h"><text x="852" y="536">Color</text><text x="893" y="536">Wavelength (nm)</text><text x="938" y="536">Wavelength (nm)</text><text x="985" y="536">Photon energy (eV)</text></g>
<g class="t">
<text x="893" y="550">380–450</text><text x="938" y="550">670–790</text><text x="985" y="550">2.75–3.26</text>
<text x="893" y="564">450–485</text><text x="938" y="564">620–670</text><text x="985" y="564">2.56–2.75</text>
<text x="893" y="578">485–500</text><text x="938" y="578">600–620</text><text x="985" y="578">2.48–2.56</text>
<text x="893" y="591">500–565</text><text x="938" y="591">530–600</text><text x="985" y="591">2.19–2.48</text>
<text x="893" y="605">565–590</text><text x="938" y="605">510–530</text><text x="985" y="605">2.10–2.19</text>
<text x="893" y="619">590–625</text><text x="938" y="619">480–510</text><text x="985" y="619">1.98–2.10</text>
<text x="893" y="632">625–750</text><text x="938" y="632">400–480</text><text x="985" y="632">1.65–1.98</text>
</g>
<g font-size="4.800" font-weight="bold">
<circle cx="841.500" cy="548" r="3" fill="#7b10d8"/><text x="847" y="550" fill="#7b10d8">Violet</text>
<circle cx="841.500" cy="562" r="3" fill="#3a3ae8"/><text x="847" y="564" fill="#3a3ae8">Blue</text>
<circle cx="841.500" cy="576" r="3" fill="#2de0e8"/><text x="847" y="578" fill="#2de0e8">Cyan</text>
<circle cx="841.500" cy="589" r="3" fill="#3ac020"/><text x="847" y="591" fill="#3ac020">Green</text>
<circle cx="841.500" cy="603" r="3" fill="#f0e020"/><text x="847" y="605" fill="#f0e020">Yellow</text>
<circle cx="841.500" cy="616" r="3" fill="#f08a10"/><text x="847" y="618" fill="#f08a10">Orange</text>
<circle cx="841.500" cy="630" r="3" fill="#e83a10"/><text x="847" y="632" fill="#e83a10">Red</text>
</g>
<!-- yellow tag -->
<path d="M791 513h97l9 10-9 10h-97z" fill="#f5d213"/>
<g font-size="4.800" font-weight="bold" fill="#3a3010" font-family="Liberation Mono,monospace"><text x="804" y="520" textLength="68" lengthAdjust="spacingAndGlyphs">The amount of penetration of UV</text><text x="804" y="530" textLength="73" lengthAdjust="spacingAndGlyphs">relative to altitude in Earth's ozone</text></g>
<!-- visible spectrum -->
<path d="M841 644v13M871 644v13M891 644v13M924 644v13M933 644v13M946 644v13M1002 644v13M841 657h161" stroke="#777" stroke-width=".6" fill="none"/>
<g font-size="6.500" font-weight="bold" fill="#444" text-anchor="middle"><text x="856" y="651">V</text><text x="881" y="651">B</text><text x="905" y="651">G</text><text x="927.500" y="651">Y</text><text x="940" y="651">O</text><text x="973" y="651">R</text></g>
<rect x="841" y="659" width="161" height="6.500" rx="1" fill="url(#vs)"/>
<text x="920" y="678" font-size="6" fill="#777" text-anchor="middle">Visible Spectrum</text>
<!-- notes -->
<path d="M833 683h52v6h-52z" fill="#f7e62e"/><path d="M934 685h54v7h-54zM934 692h61v7h-61z" fill="#f7e62e"/>
<g font-size="3.900" font-weight="bold" fill="#222" font-family="Liberation Mono,monospace"><text x="834" y="688" textLength="44" lengthAdjust="spacingAndGlyphs">RADIO WAVE PHOTONS</text><text x="934" y="690.500" textLength="69" lengthAdjust="spacingAndGlyphs">C IS THE SPEED OF LIGHT IN VACUUM</text><text x="934" y="697.500" textLength="61" lengthAdjust="spacingAndGlyphs">H IS THE PLANCK CONSTANT.</text></g>
<path d="M840 692q3 10 13 13" fill="none" stroke="#555" stroke-width=".6"/>
<rect x="856" y="704" width="127" height="21" fill="#4fd8e8"/><rect x="856" y="723" width="127" height="2" fill="#a8e070"/>
<g class="s" fill="#083818" font-style="italic">
<text x="860" y="719" font-size="15">f</text><text x="868" y="716" font-size="9">=</text><text x="878" y="712" font-size="8">c</text><rect x="876" y="714" width="9" height=".8" fill="#083818"/><text x="877" y="723" font-size="8">λ</text>
<text x="888" y="717" font-size="7">, or</text><text x="905" y="719" font-size="15">f</text><text x="913" y="716" font-size="9">=</text><text x="923" y="712" font-size="8">E</text><rect x="921" y="714" width="9" height=".8" fill="#083818"/><text x="923" y="723" font-size="8">h</text>
<text x="934" y="717" font-size="7">, or</text><text x="953" y="719" font-size="13">E</text><text x="963" y="716" font-size="9">=</text><text x="971" y="712" font-size="8">hc</text><rect x="971" y="714" width="10" height=".8" fill="#083818"/><text x="973" y="723" font-size="8">λ</text>
</g>

<!-- blue cursors -->
<path d="M392.500 445L408 456l-8 1.500-4 6z" fill="#4d4de0"/>
<path d="M638.500 73L660 84l-12 2-7 8z" fill="#3f42e0"/>

<!-- TOP TOOLBARS -->
<rect x="267" y="36" width="117" height="37" rx="6" fill="#ededed"/>
<g class="ic"><rect x="279" y="50" width="17" height="12" rx="1.500"/><path d="M279 54h17M285 50v-2l-1-2M290 50v-2l1-2M285 54v2M290 54v2"/></g>
<text x="303" y="59" font-size="11.500" font-weight="bold" fill="#333" textLength="72" lengthAdjust="spacingAndGlyphs">Herramientas</text>
<rect x="389" y="36" width="544" height="37" rx="6" fill="#eaeaea"/>
<rect x="939" y="36" width="85" height="37" rx="6" fill="#ededed"/>
<rect x="393" y="39" width="31" height="31" rx="5" fill="#7b82f8"/>
<path d="M402 46l14 9-6 2-3 6z" fill="none" stroke="#fff" stroke-width="1.300" stroke-linejoin="round"/>
<g class="ic" stroke="#555" style="stroke-width:1">
<path d="M427 53l3 3 3-3M486 53l3 3 3-3M538 53l3 3 3-3M667 53l3 3 3-3M718 53l3 3 3-3M978 53l3 3 3-3"/>
<path d="M445 50v11M891 49v11" stroke="#ccc"/>
</g>
<g class="ic">
<rect x="459" y="47" width="18" height="15.500" rx="2"/><path d="M464 50v9.500M472 50v9.500M464 54.500h8M462 50h4M462 59.500h4M470 50h4M470 59.500h4" style="stroke-width:1"/>
<path d="M511 49h16v3M511 49v3M519 49v12M515 61.500h8"/>
<path d="M564 60c-3-2-4-4-4-6 0-5 5-8 11-8s11 3 11 8-5 8-11 8h-5M564 60l-.5 2 7 .5 6.500.5M566 52h9M566 56h5"/>
<path d="M603 58l6-10q2-2 5-1l3 2q2 2 1 5l-6 8-5 1-4-1zM603 58l9 3M603 58l-1 5 4 0"/>
<rect x="640" y="47" width="16" height="15.500"/>
<rect x="690" y="52" width="18" height="10" rx="1.500"/><path d="M690 55.500h18M694 58.500v3M698 58.500v3M702 58.500v3M690 46h18M690 45v5M708 45v5"/>
<path d="M757 50.500l-10 10a2 2 0 0 0 3 3l10.500-11a4.200 4.200 0 0 0-6-6l-11 11.500a6 6 0 0 0 8.500 8" style="stroke-width:1.150"/>
<path d="M781 49q0-3 3-3h10q3 0 3 3v9l-6 5h-7q-3 0-3-3zM791 63v-3q0-3 3-3h3M785 51v1M793 51v1M785 56q3 3 6 1"/>
<circle cx="828" cy="50" r="4"/><path d="M828 54v3M820 57h16v4h-16zM820 63.500h16"/>
<path d="M855 57h24M857 52l3 3M860 52l-3 3M866 58q4-6 4-9 0-3-2-2-3 2-2 14M869 54q3 0 4 1 0 3 4 1"/>
<rect x="953" y="47" width="13" height="15" rx="3" stroke="#aaa"/><rect x="957" y="45" width="5" height="5" rx="1" stroke="#aaa"/><circle cx="959.500" cy="54" r="1.500" stroke="#aaa"/>
</g>
<rect x="898" y="39" width="32" height="31" fill="#dfdfdf" rx="3"/>
<text x="905" y="59" font-size="11.500" fill="#555" textLength="25" lengthAdjust="spacingAndGlyphs">Cerra</text>
<circle cx="1006" cy="54" r="11" fill="url(#ai)"/>
<ellipse cx="1006" cy="54" rx="7" ry="3" transform="rotate(30 1006 54)" fill="none" stroke="#fff" stroke-width=".9"/><ellipse cx="1006" cy="54" rx="3" ry="7" transform="rotate(30 1006 54)" fill="none" stroke="#fff" stroke-width=".9"/>

<!-- TITLE BAR -->
<rect x="54" y="0" width="174" height="28" rx="5" fill="#eeeeee"/>
<g class="ic">
<path d="M19 10.500L27 4.500l8 6V19q0 2-2 2H21q-2 0-2-2zM24 21v-6q0-3 3-3t3 3v6" stroke="#333"/>
<g stroke="#777" style="stroke-width:1"><rect x="60.500" y="8" width="11" height="8" rx="2"/><path d="M66 16v2M63 18.500h6"/><rect x="239" y="8" width="11" height="8" rx="2"/><path d="M244.500 16v2M241.500 18.500h6"/></g>
<path d="M419 13h12M425 7v12" stroke="#bbb"/>
<path d="M813 10.500l5 4 5-4" stroke="#555"/>
<path d="M851 17q2-1 2-6 0-5 4.500-5t4.500 5q0 5 2 6zM855 20q2.500 2 5 0M857.500 6V4" stroke="#333"/>
<path d="M933 12h14" stroke="#666" style="stroke-width:1.500"/>
<rect x="971" y="7" width="13.500" height="11" stroke="#555" style="stroke-width:1.400"/>
<path d="M1011 7l13 11M1024 7l-13 11" stroke="#555"/>
<path d="M918 9v6" stroke="#ddd"/>
</g>
<text x="77" y="17.500" font-size="11" fill="#555" textLength="32" lengthAdjust="spacingAndGlyphs">UPDF-</text>
<text x="255" y="17.500" font-size="11" fill="#888" textLength="39" lengthAdjust="spacingAndGlyphs">UPDF-2</text>
<circle cx="895" cy="12.500" r="11.500" fill="url(#av)"/><text x="895" y="17" font-size="12" fill="#ddd" text-anchor="middle">X</text>

<!-- SIDEBAR -->
<rect x="4" y="32" width="256" height="760" rx="8" fill="#ebebec"/>
<path d="M50 32H12a8 8 0 0 0-8 8V771H50z" fill="#efeff0"/>
<g class="ic" stroke="#555">
<circle cx="22" cy="50" r="3.300"/><circle cx="32" cy="50" r="3.300"/><circle cx="22" cy="59" r="3.300"/><circle cx="32" cy="59" r="3.300"/>
<path d="M18 82h18" stroke="#e0e0e0"/>
<circle cx="25.500" cy="107.500" r="7.500"/><path d="M31 113l4.500 4"/>
<path d="M22 185h9q3 0 3 3v14l-7-5-7 5v-14q0-3 2-3z"/>
<path d="M27 243q-10 0-10-9 0-9 9.500-9t9.500 9v9zM22 230v7M27 230v7M31 230v7"/>
<path d="M23 268h7l4 4v11q0 3-3 3H22q-3 0-3-3V271q0-3 4-3zM22 278q0-2 2-2h6q2 0 2 2t-2 2h-6q-2 0-2-2z"/>
<path d="M33 315l-10 10a2 2 0 0 0 3 3l10.500-11a4.200 4.200 0 0 0-6-6l-11 11.500a6 6 0 0 0 8.500 8" transform="translate(0,-3)" style="stroke-width:1.150"/>
<path d="M20 745q0-2 2-2h5v16h-5q-2 0-2-2zM27 743l2 0q3 0 3 4 0 3-3 4 4 0 6 4t-3 4h-5M23 755h.1"/>
</g>
<rect x="12" y="136" width="30" height="30" rx="6" fill="#7b82f8"/>
<path d="M22 143h7l5 5v10q0 2-2 2H22q-3 0-3-2V146q0-3 3-3zM29 143v3q0 2 2 2h3" fill="none" stroke="#fff" stroke-width="1.300"/>
<text x="66" y="59" font-size="10.500" font-weight="bold" fill="#444" textLength="56" lengthAdjust="spacingAndGlyphs">Miniaturas</text>
<path d="M226 46h9l-1 7 3 4h-6v6h-2v-6h-6l3-4z" fill="#7b82f8"/>

<!-- Thumb 18 -->
<rect x="77" y="81" width="157" height="100" rx="2" fill="url(#t18)"/>
<text x="91" y="97" font-size="12.500" fill="#54759f" textLength="117" lengthAdjust="spacingAndGlyphs">POTENTIAL EXPLORATION</text>
<path d="M130 140l34-42 10 4-20 40z" fill="#4a4a88" opacity=".35"/>
<rect x="156" y="101" width="58" height="42" fill="#2c3444"/><path d="M156 111h58M156 123h58M156 133h58" stroke="#1c2236" stroke-width=".8"/>
<path d="M158 105h30M158 115h30M158 127h30M158 137h30M200 105h8M200 115h8M200 127h8M200 137h8" stroke="#6a7488" stroke-width=".7"/>
<path d="M92 103h40M92 110h40M92 116h44M92 121h44M92 126h38" stroke="#3c5a88" stroke-width=".9"/>
<rect x="92" y="138" width="55" height="32" rx="2" fill="#181d30"/>
<path d="M102 165v-10M108 165v-16M116 165v-20M124 165v-8M132 165v-14M139 165v-10" stroke="#7a8090" stroke-width="1.200"/>
<path d="M157 151h46" stroke="#3a8aa8" stroke-width="1.200"/><path d="M157 157h46M157 161h46M157 165h46M157 169h40M157 173h12" stroke="#3a4e6a" stroke-width=".8"/>
<g fill="#555" font-size="13"><text x="78" y="202">18</text><text x="78" y="340">19</text><text x="78" y="488">20</text><text x="78" y="616">21</text><text x="78" y="745">22</text></g>
<g fill="#444"><circle cx="221" cy="197" r="1"/><circle cx="225" cy="197" r="1"/><circle cx="229" cy="197" r="1"/><circle cx="221" cy="335" r="1"/><circle cx="225" cy="335" r="1"/><circle cx="229" cy="335" r="1"/><circle cx="221" cy="483" r="1"/><circle cx="225" cy="483" r="1"/><circle cx="229" cy="483" r="1"/><circle cx="221" cy="611" r="1"/><circle cx="225" cy="611" r="1"/><circle cx="229" cy="611" r="1"/><circle cx="221" cy="740" r="1"/><circle cx="225" cy="740" r="1"/><circle cx="229" cy="740" r="1"/></g>

<!-- Thumb 19 -->
<rect x="78" y="232" width="155" height="87" rx="2" fill="#fbfbfd"/>
<g fill="#666" font-size="7" font-weight="bold"><text x="88" y="247" textLength="45" lengthAdjust="spacingAndGlyphs">TRAVEL AGENT</text><text x="88" y="257" textLength="42" lengthAdjust="spacingAndGlyphs">RESERVATION</text><text x="88" y="267" textLength="18" lengthAdjust="spacingAndGlyphs">FORM</text></g>
<path d="M90 275q16-8 20 2t26 18q2 8-10 14-6 4-8 10H95q-12-8-9-20 0-8 3-12-6-6 1-12z" fill="#9fd0f0"/>
<ellipse cx="120" cy="284" rx="16" ry="17" fill="#f0cf30"/><path d="M104 284q16-10 32 0M106 276q14 10 28 0" fill="none" stroke="#3a5a8a" stroke-width="2.500"/><path d="M110 272q10-6 20 0" fill="none" stroke="#d84040" stroke-width="3"/><rect x="118" y="300" width="5" height="4" fill="#604020"/>
<circle cx="95" cy="297" r="4" fill="#e89030"/><circle cx="104" cy="309" r="3.500" fill="#d05040"/>
<g fill="#cfe6f6"><rect x="139" y="238" width="84" height="5"/><rect x="139" y="270" width="84" height="5"/></g>
<g fill="#eceaf8" stroke="#b8b4d8" stroke-width=".4"><rect x="140" y="248" width="34" height="5"/><rect x="177" y="248" width="46" height="5"/><rect x="140" y="259" width="34" height="5"/><rect x="177" y="259" width="46" height="5"/><rect x="140" y="280" width="34" height="4"/><rect x="177" y="280" width="46" height="4"/><rect x="140" y="287" width="83" height="5"/><rect x="140" y="293" width="83" height="4"/><rect x="150" y="302" width="73" height="13"/></g>
<rect x="150" y="301" width="8" height="3" fill="#e03050"/>
<path d="M168 309q4-6 6-1t6-1 6 1 6-1 8 0" fill="none" stroke="#888" stroke-width=".6"/>

<!-- Thumb 20 -->
<rect x="79" y="370" width="153" height="96" fill="url(#t20)"/>
<rect x="155" y="370" width="77" height="96" fill="#b8e0f0" opacity=".25"/>
<text x="91" y="390" font-size="10.500" fill="#4a2f90" textLength="46" lengthAdjust="spacingAndGlyphs">Geometry</text>
<rect x="107" y="416" width="20" height="19" rx="2" fill="none" stroke="#8a8ae0" stroke-width=".5"/>
<path d="M108 419l13-3 4 4v11l-12 3-5-4z" fill="#d060b0"/><path d="M112 422l9-2 2 3v8l-9 2z" fill="#f09060"/>
<circle cx="99" cy="414" r="4" fill="#4060e0"/>
<path d="M130 416l11-7" stroke="#f07a80" stroke-width="2"/><path d="M133 441l8-9" stroke="#30a0a0" stroke-width="3"/>
<rect x="92" y="432" width="10" height="10" transform="rotate(30 97 437)" fill="none" stroke="#2060b0" stroke-width="2.500"/>
<circle cx="114" cy="451" r="4" fill="#f08080"/><circle cx="127" cy="446" r="3.500" fill="#f090a0"/>
<rect x="160" y="390" width="65" height="5" fill="#9a88e0"/><rect x="161" y="396" width="64" height="24" fill="#dcdcf8"/>
<path d="M163 405l10-7M184 398v14M195 410l10-10M213 398l10 14M223 398l-10 14" stroke="#999" stroke-width=".5"/>
<path d="M160 377h64M160 380h64M160 383h64M160 386h30M160 426h64M160 429h64M160 432h64M160 435h40M160 442h64M160 445h64M160 448h64M160 451h40" stroke="#7a70b0" stroke-width=".5"/>

<!-- Thumb 21 -->
<rect x="77" y="517" width="157" height="79" rx="2" fill="#f5f5f5"/>
<rect x="128" y="517" width="106" height="24" fill="#dddacd"/><rect x="186" y="517" width="47" height="79" fill="#f0ecdc"/>
<rect x="77" y="517" width="51" height="28" fill="#e8b800"/>
<rect x="77" y="544" width="51" height="52" fill="#000"/>
<g fill="#222" font-size="5.800" font-weight="bold"><text x="82" y="528" textLength="24" lengthAdjust="spacingAndGlyphs">QUANTUM</text><text x="82" y="537" textLength="29" lengthAdjust="spacingAndGlyphs">MECHANICS</text></g>
<g fill="#e06ad0"><circle cx="85" cy="552" r="2.500"/><circle cx="94" cy="552" r="2.500"/><circle cx="85" cy="561" r="2.500"/><circle cx="94" cy="561" r="2.500"/><circle cx="103" cy="561" r="2.500"/><circle cx="85" cy="571" r="2.500"/><circle cx="94" cy="571" r="2.500"/><circle cx="103" cy="571" r="2.500"/><circle cx="112" cy="571" r="2.500"/><circle cx="85" cy="581" r="2.500"/><circle cx="94" cy="581" r="2.500"/><circle cx="103" cy="581" r="2.500"/><circle cx="112" cy="581" r="2.500"/><circle cx="121" cy="581" r="2.500"/><circle cx="85" cy="590" r="2.500"/><circle cx="94" cy="590" r="2.500"/><circle cx="103" cy="590" r="2.500"/><circle cx="112" cy="590" r="2.500"/><circle cx="121" cy="590" r="2.500"/></g>
<rect x="107" y="548" width="19" height="3" fill="url(#hb)"/>
<path d="M131 522h45M131 525h45M131 528h45M131 531h45M131 534h45M131 537h30M190 522h36M190 525h36M190 529h8" stroke="#9a9a92" stroke-width=".6"/>
<rect x="131" y="541" width="27" height="3" fill="#f5d020"/>
<path d="M131 552h45" stroke="#555" stroke-width=".8"/>
<path d="M131 562h26M131 566h26M131 570h26M131 574h26M131 578h26M131 581h26M162 556h12M178 556h10M162 566h12M178 566h10M162 576h12M178 576h10" stroke="#999" stroke-width=".7"/>
<rect x="131" y="576" width="24" height="5" fill="#cfa0e8"/><rect x="170" y="585" width="14" height="4" fill="#f5dc5a"/>
<path d="M192 530h.1M200 522v40M192 560h30" stroke="#888" stroke-width=".5"/>
<rect x="199" y="530" width="6" height="30" fill="#70d0c8"/>
<path d="M190 568h36M190 571h36M190 574h36M190 577h36M190 580h36M190 583h36M190 586h36M190 589h30" stroke="#888" stroke-width=".5"/>
<rect x="83" y="538" width="149" height="57" rx="1.500" fill="none" stroke="#7b82f5" stroke-width="1.800"/>

<!-- Thumb 22 -->
<rect x="79" y="646" width="153" height="77" rx="2" fill="#36a8e8"/>
<rect x="88" y="646" width="144" height="77" fill="#2fb5f5"/>
<rect x="86" y="664" width="33" height="9" fill="#5a90e0"/>
<g fill="#0a0a6a"><text x="85" y="659" font-size="6.500" font-weight="bold" textLength="40" lengthAdjust="spacingAndGlyphs">Electromagnetic</text><text x="85" y="670" font-size="7" textLength="32" lengthAdjust="spacingAndGlyphs">Spectrum</text></g>
<rect x="99" y="677" width="44" height="3" fill="#e8e060"/>
<path d="M90 675h55M90 683h55" stroke="#3070c0" stroke-width=".6"/>
<path d="M96 687h10M110 687h35" stroke="#100a5e" stroke-width="1.500"/>
<path d="M154 651h30M154 654h30M154 657h30M154 660h30M154 664h30M154 667h30M154 670h30M154 673h30M154 676h30M154 679h30" stroke="#1e7ac8" stroke-width=".8"/>
<rect x="154" y="681" width="34" height="24" fill="#04144e"/>
<path d="M158 700l26-13" stroke="#c07050" stroke-width=".7"/>
<path d="M155 708h32M155 711h32M155 714h32M155 717h28" stroke="#1e7ac8" stroke-width=".6"/>
<rect x="192" y="651" width="37" height="70" fill="#f8fbfd"/>
<path d="M197 655h30v23h-30z" fill="none" stroke="#888" stroke-width=".4"/>
<rect x="206" y="655" width="4" height="12" fill="#f060c8"/><rect x="212" y="655" width="4" height="22" fill="#40e070"/><rect x="218" y="655" width="3" height="22" fill="#50e8e8"/>
<rect x="187" y="679" width="18" height="4" fill="#f5d213"/>
<path d="M194 686h32M194 689h32M194 692h32M194 695h32M194 698h32" stroke="#b0c0d0" stroke-width=".8"/>
<rect x="196" y="705" width="26" height="2" fill="#222"/>
<rect x="199" y="714" width="22" height="5" fill="#50d8e0"/><rect x="193" y="710" width="10" height="2" fill="#f5e030"/><rect x="214" y="710" width="10" height="2" fill="#f5e030"/>
<path d="M95 707h50" stroke="#100a6e" stroke-width="1.800"/><path d="M95 716h50" stroke="#100a6e" stroke-width="1.800"/><rect x="115" y="705.500" width="10" height="3" fill="#e8d030"/><rect x="116" y="714.500" width="24" height="3" fill="#80e8b0"/>
<rect x="88" y="646" width="144" height="77" rx="1.500" fill="none" stroke="#6a6cf0" stroke-width="1.800"/>

<!-- BOTTOM BARS -->
<rect x="266" y="733" width="114" height="38" rx="6" fill="#eeeeee"/>
<path d="M288 746l-5 6 5 6" fill="none" stroke="#666" stroke-width="1.300"/>
<path d="M360 746l5 6-5 6" fill="none" stroke="#ccc" stroke-width="1.300"/>
<g fill="#555"><circle cx="319" cy="752" r="1"/><circle cx="323" cy="752" r="1"/><circle cx="327" cy="752" r="1"/></g>
<rect x="602" y="733" width="422" height="38" rx="6" fill="#eeeeee"/>
<circle cx="617" cy="752" r="7" fill="#c8c8c8"/><path d="M615 749l3 3-3 3" fill="none" stroke="#fff" stroke-width="1.100"/>
<g class="ic" stroke="#555">
<path d="M638 746h6q2 0 2 2v10q-1-2-3-2h-5zM654 746h-6q-2 0-2 2v10q1-2 3-2h5zM640 749h3M640 752h3M649 749h3M649 752h3" style="stroke-width:1.100"/>
<path d="M661 745v14M711 745v14M855 745v14" stroke="#d4d4d4"/>
<path d="M676 746h18v10h-18zM681 761h8M685 756v5" style="stroke-width:1.100"/>
<path d="M789 754l5-5 5 5M826 750l5 5 5-5" style="stroke-width:1.300"/>
<path d="M927 752h13M963 752h13M969.500 746v13" stroke="#555"/>
</g>
<rect x="721" y="741" width="25" height="23" rx="4" fill="#fbfbfb"/>
<text x="733.500" y="757" font-size="12" text-anchor="middle" fill="#444">22</text>
<text x="750" y="757" font-size="11" fill="#888">/ 29</text>
<rect x="864" y="739" width="44" height="25" rx="6" fill="#f8f8f8"/>
<text x="886" y="757" font-size="12" text-anchor="middle" fill="#444">51%</text>
<rect x="1001" y="745" width="16" height="14" rx="3" fill="none" stroke="#555" stroke-width="1.100"/>
<text x="1009" y="755" font-size="7.500" text-anchor="middle" font-weight="bold" fill="#444">1:1</text>

<!-- BLUE ARROWS -->
<path d="M182 95L158 28" stroke="#0b55d6" stroke-width="4.500"/>
<path d="M153 15l19 17-22 8z" fill="#0b55d6"/>
<path d="M246 99L296 37" stroke="#0b55d6" stroke-width="4.500"/>
<path d="M309 20l-24 10 20 15z" fill="#0b55d6"/>
</svg>
</body></html>
